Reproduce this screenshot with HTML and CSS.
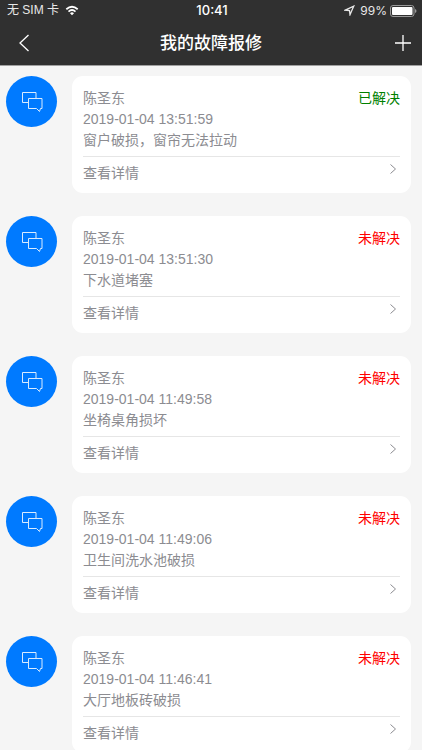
FILE: index.html
```html
<!DOCTYPE html>
<html lang="zh-CN">
<head>
<meta charset="utf-8">
<meta name="viewport" content="width=device-width, initial-scale=1">
<title>我的故障报修</title>
<link rel="stylesheet" href="styles.css">
</head>
<body>
<svg class="defs" width="0" height="0" aria-hidden="true">
  <symbol id="chat" viewBox="0 0 22 22">
    <path d="M7 11.500H1.500V1.500H15V7" />
    <path d="M7.500 7.500H21V17.500H19.500L18.500 20.500L15.500 17.500H7.500Z" />
  </symbol>
  <symbol id="arrow" viewBox="0 0 8 12">
    <path d="M1.500 1.500L6.500 6L1.500 10.500" />
  </symbol>
</svg>
<div class="app">
  <header class="top">
    <div class="status">
      <div class="status-side">
        <span>无 SIM 卡</span>
        <svg class="wifi" width="14" height="11" viewBox="0 0 16 12" aria-hidden="true">
          <path d="M1.500 4.600Q8-1.200 14.500 4.600M4 7.200Q8 3.700 12 7.200" />
          <path class="fill" d="M5.700 9Q8 7.200 10.300 9L8 11.500Z" />
        </svg>
      </div>
      <span class="clock">10:41</span>
      <div class="status-side end">
        <svg class="locate" width="11" height="11" viewBox="0 0 11 11" aria-hidden="true">
          <path d="M1.200 5.200L9.700 1.200L6 9.700L5.500 5.500Z" />
        </svg>
        <span>99%</span>
        <svg class="battery" width="27" height="12" viewBox="0 0 27 12" aria-hidden="true">
          <rect class="shell" x="0.500" y="0.500" width="23.500" height="11" rx="2.500" />
          <rect class="charge" x="2" y="2" width="20.500" height="8" rx="1" />
          <path class="tip" d="M25 4Q26.500 4.500 26.500 6T25 8Z" />
        </svg>
      </div>
    </div>
    <nav class="nav">
      <button class="nav-button" type="button" aria-label="返回">
        <svg width="12" height="18" viewBox="0 0 12 18"><path d="M10.500 1L2 9L10.500 17" /></svg>
      </button>
      <h1>我的故障报修</h1>
      <button class="nav-button end" type="button" aria-label="新增">
        <svg width="18" height="18" viewBox="0 0 18 18"><path d="M9 1V17M1 9H17" /></svg>
      </button>
    </nav>
  </header>
  <main class="list">
    <article class="item">
      <div class="avatar"><svg width="22" height="22"><use href="#chat" /></svg></div>
      <div class="card">
        <div class="head"><span>陈圣东</span><span class="done">已解决</span></div>
        <time>2019-01-04 13:51:59</time>
        <p>窗户破损，窗帘无法拉动</p>
        <a class="more" href="#"><span>查看详情</span><svg width="8" height="12"><use href="#arrow" /></svg></a>
      </div>
    </article>
    <article class="item">
      <div class="avatar"><svg width="22" height="22"><use href="#chat" /></svg></div>
      <div class="card">
        <div class="head"><span>陈圣东</span><span class="open">未解决</span></div>
        <time>2019-01-04 13:51:30</time>
        <p>下水道堵塞</p>
        <a class="more" href="#"><span>查看详情</span><svg width="8" height="12"><use href="#arrow" /></svg></a>
      </div>
    </article>
    <article class="item">
      <div class="avatar"><svg width="22" height="22"><use href="#chat" /></svg></div>
      <div class="card">
        <div class="head"><span>陈圣东</span><span class="open">未解决</span></div>
        <time>2019-01-04 11:49:58</time>
        <p>坐椅桌角损坏</p>
        <a class="more" href="#"><span>查看详情</span><svg width="8" height="12"><use href="#arrow" /></svg></a>
      </div>
    </article>
    <article class="item">
      <div class="avatar"><svg width="22" height="22"><use href="#chat" /></svg></div>
      <div class="card">
        <div class="head"><span>陈圣东</span><span class="open">未解决</span></div>
        <time>2019-01-04 11:49:06</time>
        <p>卫生间洗水池破损</p>
        <a class="more" href="#"><span>查看详情</span><svg width="8" height="12"><use href="#arrow" /></svg></a>
      </div>
    </article>
    <article class="item">
      <div class="avatar"><svg width="22" height="22"><use href="#chat" /></svg></div>
      <div class="card">
        <div class="head"><span>陈圣东</span><span class="open">未解决</span></div>
        <time>2019-01-04 11:46:41</time>
        <p>大厅地板砖破损</p>
        <a class="more" href="#"><span>查看详情</span><svg width="8" height="12"><use href="#arrow" /></svg></a>
      </div>
    </article>
  </main>
</div>
</body>
</html>
```
FILE: styles.css
```css
* {
  box-sizing: border-box;
}

body,
h1,
p {
  margin: 0;
}

body {
  background: #f5f5f5;
  color: #8c8c91;
  font: 14px/21px "Liberation Sans", "Noto Sans CJK SC", sans-serif;
}

svg {
  display: block;
  flex: none;
  fill: none;
  stroke: currentColor;
}

.defs {
  position: absolute;
}

.app {
  display: flex;
  flex-direction: column;
  height: 100vh;
}

.top {
  flex: none;
  background: #303030;
  border-bottom: 1px solid #a0a0a0;
  color: #fff;
}

.status {
  display: flex;
  align-items: center;
  padding: 0 5px 0 7px;
  font-size: 12px;
}

.status-side {
  display: flex;
  flex: 1;
  align-items: center;
  gap: 6px;
  color: #e8e8e8;
}

.end {
  justify-content: flex-end;
}

.clock {
  font-family: Inter, sans-serif;
  font-size: 13px;
  font-weight: 500;
}

.status-side.end {
  gap: 3px;
  font-family: Inter, sans-serif;
}

.wifi {
  color: #fff;
  stroke-width: 2;
}

.fill {
  fill: currentColor;
  stroke: none;
}

.locate {
  margin-right: 2px;
  stroke-width: 1.3;
}

.shell {
  stroke: #999;
}

.charge {
  fill: #fff;
  stroke: none;
}

.tip {
  fill: #999;
  stroke: none;
}

.nav {
  display: flex;
  align-items: center;
  height: 44px;
}

.nav-button {
  display: flex;
  flex: 1;
  align-items: center;
  height: 44px;
  padding: 0 10px 0 18px;
  border: 0;
  background: none;
  color: #fff;
  stroke-width: 1.3;
}

h1 {
  font-size: 17px;
  font-weight: 500;
}

.list {
  display: flex;
  flex: 1;
  flex-direction: column;
  gap: 23px;
  min-height: 0;
  padding: 10px 11px 0 6px;
  overflow-y: auto;
  scrollbar-width: none;
}

.item {
  display: flex;
  flex: none;
  align-items: flex-start;
  gap: 15px;
}

.avatar {
  display: grid;
  flex: none;
  place-items: center;
  width: 51px;
  height: 51px;
  border-radius: 50%;
  background: #007aff;
  color: #d9ebff;
}

.card {
  flex: 1;
  min-width: 0;
  padding: 12px 11px 9px;
  border-radius: 11px;
  background: #fff;
}

.head {
  display: flex;
  justify-content: space-between;
}

time {
  display: block;
}

.done {
  color: #008000;
}

.open {
  color: #f00;
}

.more {
  display: flex;
  justify-content: space-between;
  margin-top: 5px;
  padding-top: 6px;
  border-top: 1px solid #e6e6e6;
  color: inherit;
  text-decoration: none;
}

.more svg {
  margin-right: 3px;
}
```
